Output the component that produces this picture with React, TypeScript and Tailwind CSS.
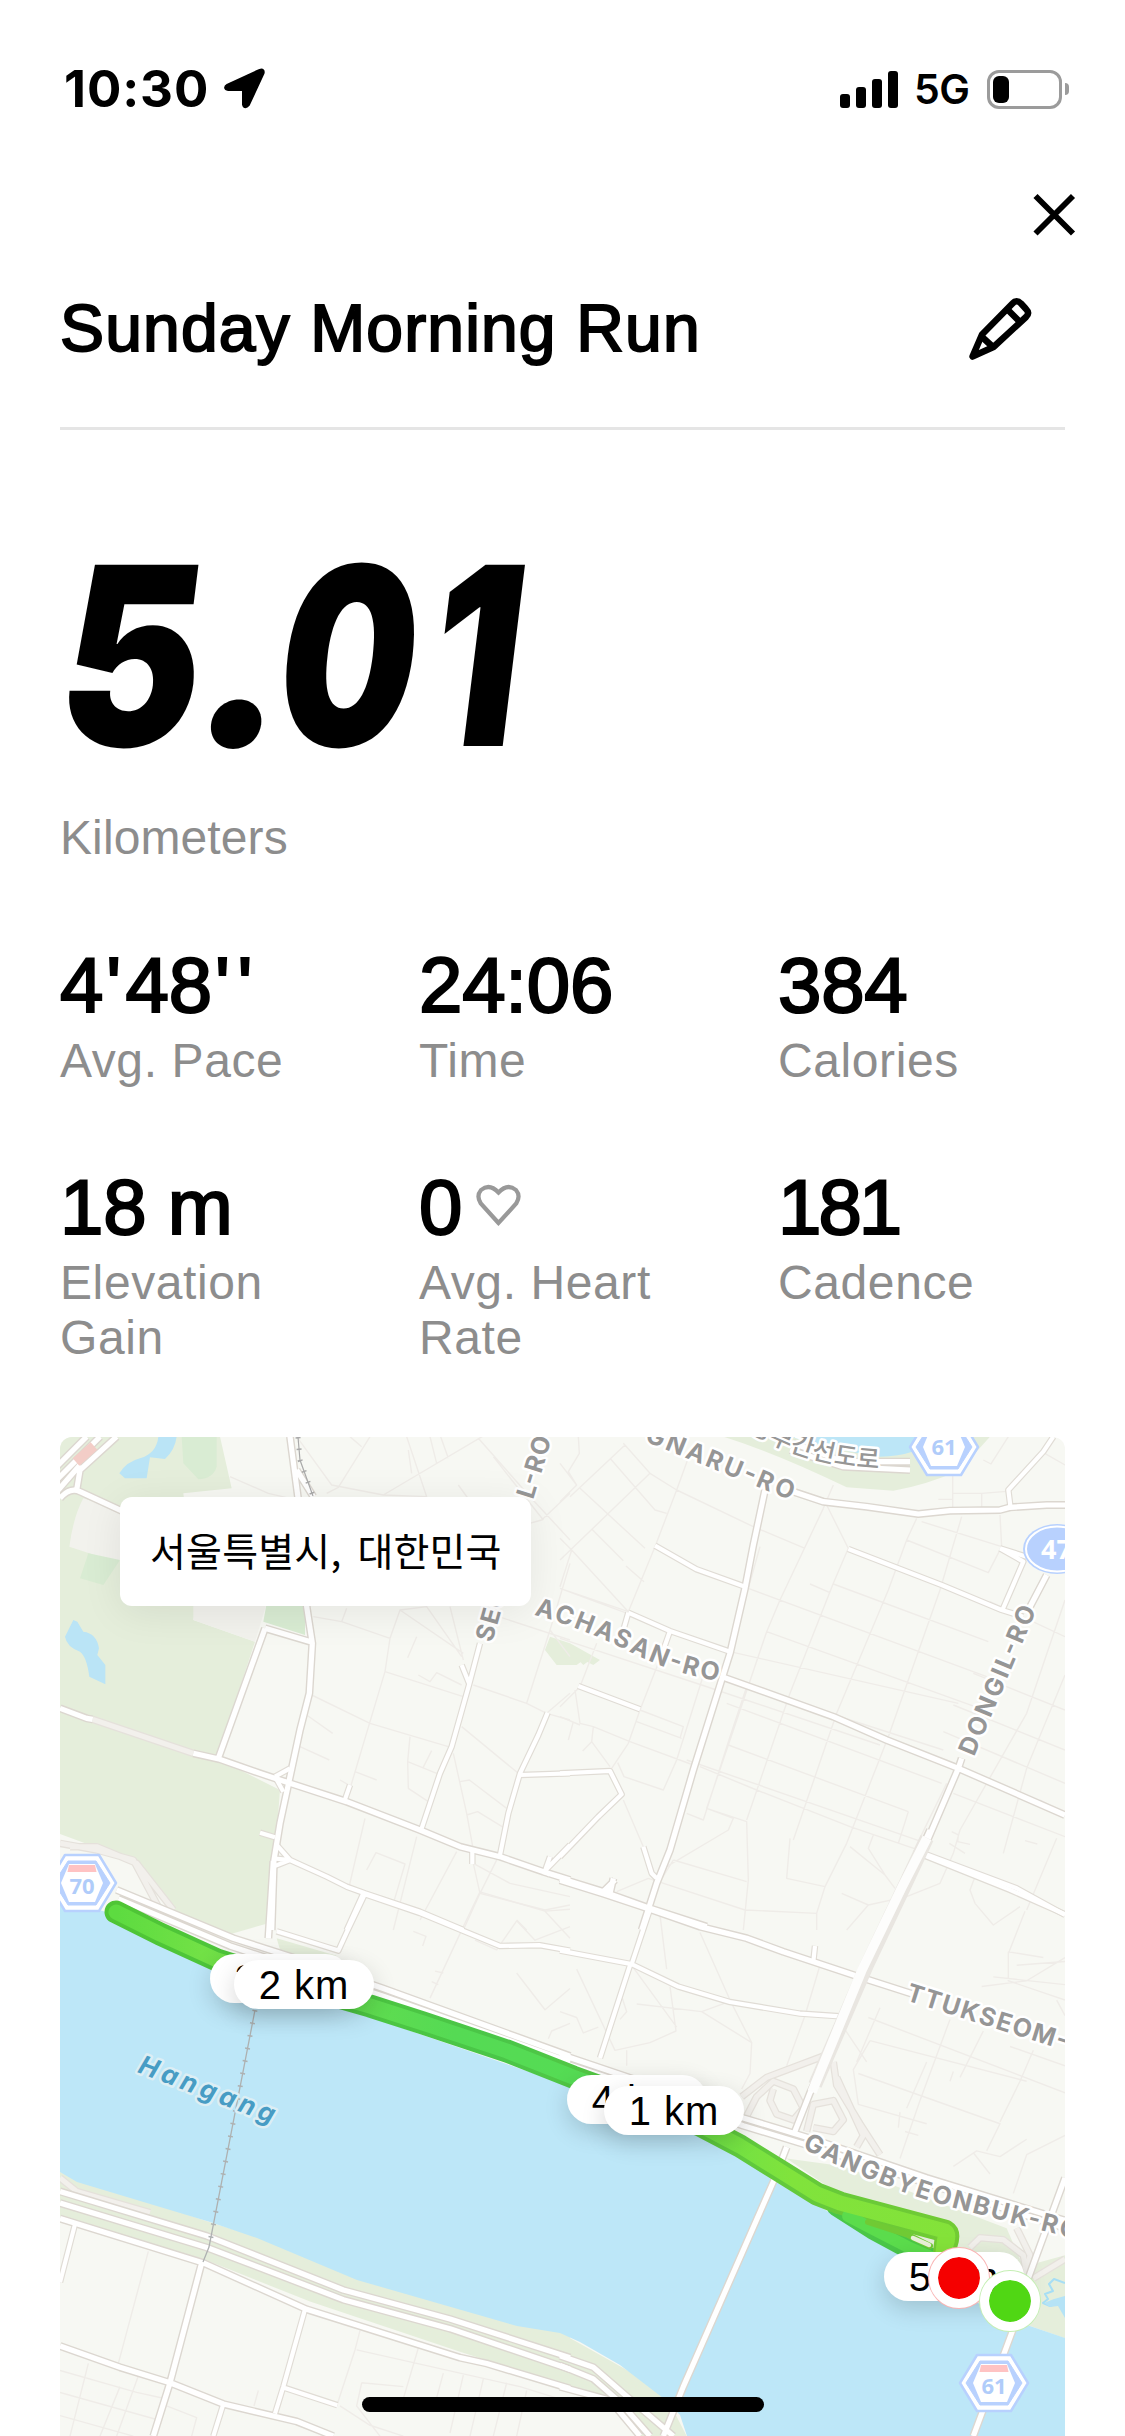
import React from "react";

type Stat = { value: string; label: string; heart?: boolean; tight?: boolean };

const STATS: Stat[] = [
  { value: "4'48''", label: "Avg. Pace" },
  { value: "24:06", label: "Time" },
  { value: "384", label: "Calories" },
  { value: "18 m", label: "Elevation Gain" },
  { value: "0", label: "Avg. Heart Rate", heart: true },
  { value: "181", label: "Cadence", tight: true },
];

const sans = "font-['Liberation_Sans',Arial,sans-serif]";

/* Map sheets: each tile keeps its own grid and is placed on the map with a transform. */
type Sheet = { transform: string; minor: string; mid: string; major: string; ramp: string };

const NW: Sheet = {
  transform: "translate(50 1430) scale(.33333)",
  minor:
    "M540 140L655 190L720 205M740 20L845 165L1000 195L1130 200L1070 20M960 20L865 172L830 190M900 20L935 50M1075 60L1085 130M1140 20L1160 100M1172 20L1195 85M1000 195L1330 0M1285 25L1440 200L1560 330M1225 165L1330 310L1475 270L1560 190M1330 80L1480 270M790 560L875 575L1020 625L1050 540L1130 530L1235 680M875 575L890 535M1020 625L1005 725L945 925L890 1110M1005 725L1240 800M1050 540L1240 670M1100 620L1073 683M1105 735L1140 755L1160 728L1235 765M785 795L960 880L1195 950M1080 920L1073 995L1160 1030M1073 995L1075 1075L1135 1115M1145 962L1118 1015M770 855L848 910M750 950L838 990M870 1050L905 1070M915 1025L980 1050M1200 530L1240 690M1270 765L1430 820L1490 850L1560 870M1430 820L1500 600L1560 400M1300 545L1560 630M1235 890L1405 1030M1210 970L1250 1150L1270 1260M1230 1055L1258 1050L1370 1135M1250 1155L1283 1145L1365 1195M1560 790L1490 850M945 1165L895 1380M1220 1265L1110 1470M1100 1220L1030 1500M950 1320L978 1268L1065 1302L1030 1420M1270 1300L1290 1390L1485 1440L1560 1425M1290 1390L1240 1500M1345 1280L1290 1390M1270 1300L1380 1360L1560 1400M1400 1470L1430 1500M1500 600L1560 680",
  mid: "M1290 640L1257 765L1205 950L1170 1030L1115 1195M1235 705L1257 760M1493 848L1465 915L1410 1030L1375 1150L1350 1275M1410 1035L1500 1032L1560 1030M900 1065L885 1108M1267 1265L1267 1302M1560 1245L1485 1322L1500 1280M1485 1322L1500 1335M630 1208L675 1222M680 1245L720 1290L670 1310M668 1285L720 1290M675 1040L720 1015M675 1040L700 1085M940 1390L890 1500M720 1290L830 1340L890 1370L945 1390L1110 1445L1240 1500",
  major:
    "M720 20L745 210L770 530L787 640L778 790L750 900L720 1040L690 1180L672 1290L665 1500M740 120L790 200M30 835L110 865L128 868M430 970L510 988L630 1030L720 1060L890 1115L1110 1200L1230 1250L1350 1280L1480 1325L1560 1350M645 595L787 637M645 595L505 985M30 205Q60 170 90 185L220 245M80 180L90 120L200 20M20 110L110 20M20 150L150 20M25 180L90 105",
  ramp: "M128 868L430 970M30 1240L140 1260L250 1290L330 1440M60 1250L140 1250L260 1300L370 1440",
};

const NE: Sheet = {
  transform: "translate(560 1430) scale(.33333)",
  minor:
    "M55 20L58 70L25 125L50 165L0 215M0 100L50 165M190 40L270 130L350 180L580 290L735 355M195 45L30 200M270 130L0 390M150 85L285 240L320 250M60 175L255 355M95 297L190 392M198 408L252 455M0 325L35 360L205 545M390 70L350 180L285 350L205 545M0 475L205 545M35 360L0 470M790 235L660 510L620 605L505 945L440 1135L560 1175L565 1350L550 1500M800 225L865 355L820 460L690 790L560 1170M1070 265L1040 330L985 480L830 850L700 1230M1205 260L1140 480L985 920L860 1240L795 1370L770 1450V1500M1040 330L1285 428L1325 350L1320 255M1085 275L1325 350M750 462L810 488M820 462L1285 635M600 350L565 475L1280 740M620 605L1245 830M510 665L1195 820M560 770L1150 960M505 945L1045 1145M380 990L1100 1240M500 820L1145 1060M510 665L0 475M0 625L425 765L960 945M110 640L60 770L0 830M330 610L240 840L205 940L155 1015M435 720L350 990L310 1080L192 1040L173 998M45 780L60 880L100 890L210 935L400 1005M100 890L95 935L150 1010M95 935L68 963M40 875L25 930M240 840L370 890L360 925M230 875L365 925M0 860L60 885M420 1010L590 1080L870 1190L1090 1265M380 1150L430 1170L510 920L560 770M440 1135L520 1165L505 1200L320 1310M340 1290L560 1355M690 1225L680 1345L795 1370M870 1250L975 1335L1005 1375M940 1215L925 1255L975 1335M1045 1145L1015 1240M1160 1060L1060 1265M1180 1090L1515 1220M1380 1430L1300 1485L1245 1420L1230 1380L1245 1340M1490 1225L1400 1440M1515 510L1400 850L1200 1200L1180 1270L1140 1360L1040 1400L925 1425M925 1425L860 1500M845 1390L925 1425M1515 620L1290 515M1515 735L1400 1015L1330 1270M1515 840L1240 730M1515 960L1180 825M1515 1060L1150 905M1515 1150L1440 1110M1175 1205L1195 1215L1193 1235L1230 1243M1168 1240L1215 1270M1395 1232L1432 1242M1178 20V240M1135 208H1178M1178 190H1265V240M1265 190L1340 184M1345 20L1293 102L1270 90M1445 65L1515 105M170 1385L265 1345M265 1345L555 1440L770 1450M300 1355L340 1290M190 1110L250 1250M820 165L790 235",
  mid: "M285 347L410 418L555 470M205 548L330 603L510 665M205 548L190 600M330 603L310 660M55 768L240 838M865 357L1145 465L1325 540L1390 560M1325 545L1390 395L1320 355M1320 355L1400 380M0 1030L150 1023L185 1093L115 1160L0 1280M250 1250L275 1330L290 1345M1090 1270L1370 1375L1515 1455M1480 20L1450 65L1345 180L1352 235",
  major:
    "M615 180L580 345L555 475L510 670L400 1020L330 1260L290 1360L245 1500M700 185L790 215L920 230L1075 252L1170 242L1320 240L1350 232L1460 225L1515 225M485 740L820 860L980 930L1195 1015L1515 1155M1460 435L1405 540M1205 985L1195 1015L1090 1260L1040 1365L970 1500M0 1345L130 1385L270 1435L440 1490M130 1385L165 1350M150 1390L160 1345M690 60L850 110L1050 120M700 40L850 95L1050 95",
  ramp: "",
};

const SW: Sheet = {
  transform: "translate(50 1830) scale(.33333 .38655)",
  minor:
    "M1290 160L1240 250L1140 435M1400 235L1340 310L1275 285M1290 160L1485 210L1560 205M1485 210L1560 280M1400 235L1455 285L1560 250M1090 262L1128 275L1118 300M1400 370L1485 465L1560 410M1155 365L1180 370M1145 392L1165 400M1495 540L1505 520L1560 500M295 1090L205 1380M930 1295L915 1345L860 1490M920 1345L1410 1440L1560 1480M1105 1340L1050 1500M1180 1405L1150 1500M1240 1410L1200 1560M1300 1420L1260 1568M1370 1430L1330 1568M1430 1450L1400 1568M935 1430L920 1490L990 1568M935 1430L1060 1440M115 1380L60 1568M30 1398L260 1455L340 1470M210 1440L150 1568M270 1400L200 1568M30 1455L320 1525M30 1515L250 1568M350 1490L440 1520L425 1568M625 1450L612 1490M870 1490L960 1540L1060 1568",
  mid: "M680 262L865 312L890 265L945 165M940 165L1110 215L1350 300L1470 298L1560 312M75 1020L30 1170M765 1240L700 1440L675 1510M700 1442L862 1488M520 1485L490 1568",
  major:
    "M30 1005L460 1120L770 1240L1230 1365L1310 1380L1560 1445M455 1120L360 1430L310 1568M30 1335L210 1390L360 1430L520 1485L740 1530L850 1568M200 155L550 280L730 330L1000 410L1560 585M205 178L540 300L1000 430L1560 600M30 935L470 1050L880 1190L1200 1265L1560 1365M30 965L470 1080L880 1215L1200 1290L1560 1395M670 80L655 280",
  ramp: "M30 900L80 935L300 990",
};

const SE: Sheet = {
  transform: "translate(560 1830) scale(.33333 .38655)",
  minor:
    "M300 220L320 360M420 265L510 440L575 550L570 630L545 670M780 350L735 480L680 610M0 470L50 485L70 525L115 510M50 360L165 570L270 550L348 520L330 405M215 350L350 510M185 430L200 470L180 490M230 450L425 470L520 440M425 470L575 550M200 570V610M925 485L1515 680M930 545L1400 650M930 545L880 620L895 710L1100 760M895 630L1320 760L1280 830M960 460L890 600M1170 490L1080 700L1020 850M1270 520L1200 640M1180 625L1170 650M1345 315V390L1515 440M1345 315L1450 330M1370 350L1515 340M1265 405L1400 390L1515 330M1300 380L1515 400M1395 210L1345 320M1490 440L1515 480M1350 560L1515 610M1420 570L1380 650L1320 755M1100 600L1040 720M1020 730L1015 770M1035 780L1075 790M1180 870L1250 830L1320 845L1400 800M1240 835L1290 890M1515 790L1400 840L1360 940M850 510L920 600",
  mid: "M0 312L215 347L355 405L510 445L720 475L840 482M215 347L270 205M210 350L120 590M765 300L760 340M1090 65L1350 155L1515 218",
  major:
    "M0 130L130 165L270 205L420 250L560 280L670 315L880 375L1060 425M1110 0L1030 150L900 400L750 680L700 790M0 580L240 650L550 745L760 800L1100 900L1515 1010M0 600L240 668L550 765L760 820L1050 900L1515 1030M1515 900L1430 1100L1350 1290M680 820L640 910L370 1440L310 1568M1360 1290L1240 1568M0 1360L100 1390L200 1465L340 1568M0 1385L100 1420L180 1480L270 1568M0 1440L150 1475L240 1568",
  ramp: "M545 690L620 640L790 585M560 740L590 690L640 650L700 670L730 720L700 750L650 735L630 700L640 670M740 780L760 710L820 700L850 750L820 780L760 770M820 600L830 660L900 760L960 840M830 640L910 790L890 820M1230 1080L1260 1055L1330 1060L1390 1100L1400 1150M1420 1160L1515 1110M1370 1030L1410 1100L1395 1160",
};

const SHEETS = [NW, NE, SW, SE];

function Layer({ kind, color, width }: { kind: "minor" | "mid" | "major" | "ramp"; color: string; width: number }) {
  return (
    <g fill="none" stroke={color} strokeWidth={width} strokeLinejoin="round">
      {SHEETS.map((s, i) => (
        <path key={i} d={s[kind]} transform={s.transform} vectorEffect="non-scaling-stroke" />
      ))}
    </g>
  );
}

function HexShield({ x, y, label, bar = true }: { x: number; y: number; label: string; bar?: boolean }) {
  return (
    <g transform={`translate(${x} ${y})`} strokeLinejoin="round">
      <path d="M-17 -28H17L34 0L17 28H-17L-34 0Z" fill="#fff" stroke="#b8d1fe" strokeWidth="2.5" />
      <path d="M-14 -22H14L28 0L14 22H-14L-28 0Z" fill="#b8d1fe" stroke="#b8d1fe" />
      <path d="M-13 -19H13L21 0L13 19H-13L-21 0Z" fill="#fff" />
      {bar && <path d="M-13 -18H13L14.500 -11H-14.500Z" fill="#ffc3c3" />}
      <text y={bar ? 11 : 8} textAnchor="middle" fontSize="22" fontWeight="700" fill="#b0ccfa" fontFamily="Noto Sans">
        {label}
      </text>
    </g>
  );
}

function RoadLabels() {
  return (
    <g
      fontFamily="Inter, sans-serif"
      fontWeight="700"
      fontSize="25"
      fill="#969696"
      stroke="#fff"
      strokeWidth="5"
      strokeLinejoin="round"
      paintOrder="stroke"
    >
      <defs>
        <path id="dongbu" d="M748 1430Q805 1467 892 1469" />
        <path id="gangbyeon" d="M802 2148Q880 2188 955 2208T1088 2242" />
        <path id="achasan" d="M534 1615Q580 1627 630 1652T728 1682" />
        <path id="hangang" d="M137 2072Q205 2098 287 2130" />
      </defs>
      <text transform="translate(533 1500) rotate(-73)" textLength="64">L-RO</text>
      <text transform="translate(492 1643) rotate(-74)" textLength="54">SEO</text>
      <text transform="translate(644 1441) rotate(22)" textLength="158">GNARU-RO</text>
      <text><textPath href="#achasan" textLength="196">ACHASAN-RO</textPath></text>
      <text transform="translate(974 1757) rotate(-67)" textLength="160">DONGIL-RO</text>
      <text transform="translate(905 2000) rotate(17.500)" textLength="168">TTUKSEOM-</text>
      <text><textPath href="#gangbyeon" textLength="290">GANGBYEONBUK-RO</textPath></text>
      <text fontFamily="Noto Sans CJK KR, sans-serif" fontSize="25" fontWeight="500"><textPath href="#dongbu">동부간선도로</textPath></text>
      <text fill="#479cc4" stroke="#dceef4" fontWeight="700" fontStyle="italic" fontSize="26">
        <textPath href="#hangang" textLength="144">Hangang</textPath>
      </text>
    </g>
  );
}

function RouteMap() {
  const route =
    "M116 1912L160 1934L217 1960L300 1986L370 2006L423 2023L507 2051L573 2077L650 2105L700 2125L740 2146L777 2169L817 2194L840 2203L900 2219L945 2231Q950 2234 946 2245";
  return (
    <svg viewBox="60 1437 1005 999" width="1005" height="999" className="block">
      <defs>
        <linearGradient id="pace" x1="117" y1="0" x2="960" y2="0" gradientUnits="userSpaceOnUse">
          <stop offset="0" stopColor="#5ddb40" />
          <stop offset=".1" stopColor="#72e146" />
          <stop offset=".4" stopColor="#55da54" />
          <stop offset=".56" stopColor="#55dc54" />
          <stop offset=".8" stopColor="#80e33c" />
          <stop offset="1" stopColor="#84e239" />
        </linearGradient>
        <linearGradient id="paceEdge" x1="117" y1="0" x2="960" y2="0" gradientUnits="userSpaceOnUse">
          <stop offset="0" stopColor="#4fc535" />
          <stop offset=".45" stopColor="#4ac648" />
          <stop offset="1" stopColor="#72cb33" />
        </linearGradient>
      </defs>
      <rect x="60" y="1437" width="1005" height="999" fill="#f7f8f3" />

      <g transform={NW.transform}>
        <path d="M30 20H510L545 175L400 190L440 530L430 570L615 635L500 985L690 1080L660 1478L540 1513L370 1444L250 1293L30 1212Z" fill="#e5eedb" />
        <path d="M100 205L220 245L225 395L150 380L58 350Q70 260 100 205ZM430 520L650 520L615 635L430 570Z" fill="#f2f2ed" />
        <path d="M395 20H500V110Q490 145 445 148L400 100ZM650 520H765V615L640 575ZM115 370L210 390L160 465L90 445Z" fill="#d9ecd3" />
        <path d="M325 20H380Q375 60 345 87L300 82L290 145H225L208 130Q230 95 270 85Q320 70 325 20ZM70 570L82 575L100 605Q140 610 147 655L142 675L166 705V763L118 740Q110 680 90 665Q50 650 45 620Z" fill="#bae4f6" />
        <path d="M1500 620L1560 640L1650 690L1630 705L1600 690L1580 705H1520L1485 660Z" fill="#e5eedb" />
      </g>
      <g transform={NE.transform}>
        <path d="M490 20H1290L1200 120Q1100 165 1000 182L860 172Q650 70 490 20Z" fill="#e5eedb" />
        <path d="M690 20H1150Q1070 78 960 80Q850 65 690 20Z" fill="#bce6f7" />
        <path d="M0 635L90 690L70 705L50 685L30 705H0Z" fill="#e5eedb" />
      </g>
      <g transform={SW.transform}>
        <path d="M30 885L480 1015L1400 1260L1560 1300V1440L1230 1350L780 1220L460 1110L30 1000ZM680 280L860 325L800 345L690 310Z" fill="#e5eedb" />
      </g>
      <g transform={SE.transform}>
        <path d="M0 1300L310 1450L380 1568H240L150 1480L0 1440ZM680 850L850 870L1340 1030L1390 1130L1515 1100V1315L1400 1280L1190 1180L850 950Z" fill="#e5eedb" />
      </g>
      <path
        d="M60 1900L103 1911L210 1965L350 2010L570 2086L703 2133L773 2178L837 2217L900 2253L960 2295L1027 2325L1065 2338V2436H687L680 2415L663 2398L620 2365L580 2342L560 2333L517 2326L357 2280L257 2238L210 2222L77 2182L60 2172Z"
        fill="#bde7f8"
      />
      <path
        d="M1065 2283L1054 2279L1049 2284L1053 2291L1045 2294L1048 2299L1043 2303L1050 2306L1065 2301"
        fill="none"
        stroke="#a6def5"
        strokeWidth="2"
        strokeLinejoin="round"
      />
      <path d="M1044 2303L1054 2299L1065 2296V2318L1058 2306L1050 2307Z" fill="#b5e3f6" />

      <Layer kind="minor" color="#efece8" width={1.4} />
      <Layer kind="ramp" color="#e5e1db" width={7.5} />
      <Layer kind="ramp" color="#f2f0ec" width={5} />
      <Layer kind="mid" color="#e0dcd5" width={6.5} />
      <Layer kind="major" color="#dcd7d0" width={8} />
      <Layer kind="mid" color="#fff" width={4.2} />
      <Layer kind="major" color="#fff" width={5.2} />
      <path d="M927 1838L905 1885L867 1965L815 2085" fill="none" stroke="#e9e6e1" strokeWidth="14" />
      <path d="M927 1838L903 1885L862 1970L812 2092" fill="none" stroke="#fdfdfc" strokeWidth="9.500" />
      <path d="M76 1462L94 1446" stroke="#f3cdc7" strokeWidth="10" />
      <path d="M255 2010L209 2247L203 2262" fill="none" stroke="#aeb1b1" strokeWidth="1.300" />
      <path d="M255 2010L209 2247" fill="none" stroke="#aeb1b1" strokeWidth="5" strokeDasharray="1.500 11.300" />
      <path d="M298 1437L300 1460L313 1496" fill="none" stroke="#aaa" strokeWidth="1.200" />
      <path d="M298 1437L300 1460L313 1496" fill="none" stroke="#aaa" strokeWidth="5" strokeDasharray="1.500 10" />

      <RoadLabels />

      <g fill="none" strokeLinecap="round" strokeLinejoin="round">
        <path d="M837 2206L873 2229L910 2249L975 2278" stroke="#4ac648" strokeWidth="21" />
        <path d={route} stroke="url(#paceEdge)" strokeWidth="23" />
        <path d="M946 2240L944 2256" stroke="#72cb33" strokeWidth="23" />
        <path d="M848 2216L873 2229L910 2248L975 2276" stroke="#5bdc4c" strokeWidth="12" />
        <path d={route} stroke="url(#pace)" strokeWidth="15" />
        <path d="M944 2240L942 2256" stroke="#84e239" strokeWidth="14" />
        <path d="M868 2222L908 2235L930 2246" stroke="#70ca34" strokeWidth="6" />
        <path d="M913 2238L929 2245" stroke="#e8f0da" strokeWidth="4.500" />
      </g>

      <HexShield x={82} y={1883} label="70" />
      <HexShield x={944} y={1447} label="61" bar={false} />
      <HexShield x={994} y={2383} label="61" />
      <g>
        <ellipse cx="1057" cy="1549" rx="34" ry="25" fill="#b8d1fe" />
        <ellipse cx="1057" cy="1549" rx="31" ry="22.500" fill="#b8d1fe" stroke="#fff" strokeWidth="2" />
        <text x="1041" y="1559" fontSize="27" fontWeight="700" fill="#fff" fontFamily="Noto Sans">47</text>
      </g>
    </svg>
  );
}

function Pill({ className, children }: { className: string; children: React.ReactNode }) {
  return (
    <div
      className={`absolute flex h-[49px] w-[140px] items-center justify-center rounded-full bg-white text-[40px] leading-none tracking-[0.9px] shadow-[0_8px_24px_rgba(0,0,0,0.16)] ${className}`}
    >
      {children}
    </div>
  );
}

function StatusBar() {
  return (
    <header className="flex h-[178px] items-start justify-between pl-[64px] pr-[56px] pt-[59px] font-['Inter',sans-serif]">
      <div className="flex h-[60px] items-center">
        <span className="w-[159px] text-[51px] font-bold leading-[60px] tracking-[0.9px]">10:30</span>
        <svg width="44" height="44" viewBox="0 0 44 44">
          <path d="M5 18.500L37 3.800Q40.500 2.800 39.500 6.200L25 37.500Q22 41 21 37.500V22H5.500Q1 21 5 18.500Z" fill="#000" stroke="#000" strokeWidth="4" strokeLinejoin="round" />
        </svg>
      </div>
      <div className="flex h-[60px] items-center">
        <div className="flex h-[38px] items-end gap-1.5">
          <span className="h-[14px] w-[10px] rounded-[3px] bg-black" />
          <span className="h-[21px] w-[10px] rounded-[3px] bg-black" />
          <span className="h-[29px] w-[10px] rounded-[3px] bg-black" />
          <span className="h-[37px] w-[10px] rounded-[3px] bg-black" />
        </div>
        <span className="ml-[16px] w-[73px] text-[41px] font-semibold leading-[60px] tracking-[-0.5px]">5G</span>
        <div className="flex h-[39px] w-[75px] items-center rounded-[12px] border-[3px] border-[#9b9b9b] pl-[3px]">
          <span className="h-[27px] w-[16px] rounded-[6px] bg-black" />
        </div>
        <span className="ml-[3px] h-[12px] w-[4px] rounded-r-full bg-[#9b9b9b]" />
      </div>
    </header>
  );
}

function StatCell({ value, label, heart, tight }: Stat) {
  return (
    <div className="flex h-[222px] flex-col">
      <div className="flex h-[80px] items-center">
        <span className={`whitespace-pre text-[78px] leading-[80px] [-webkit-text-stroke:2.2px_black] ${tight ? "tracking-[-3px]" : "tracking-[-0.2px]"}`}>
          {value.split(/(')/).map((part, i) =>
            part === "'" ? (
              <span key={i} className="pl-[3px] tracking-[4.5px]">
                {part}
              </span>
            ) : (
              part
            ),
          )}
        </span>
        {heart && (
          <svg width="47" height="44" viewBox="0 0 47 44" className="-mt-[4px] ml-[13px]" fill="none">
            <path d="M23.500 40L5.800 20.500Q1 13 6 7Q14.500 0 23.500 9.500Q32.500 0 41 7Q46 13 41.200 20.500Z" stroke="#999" strokeWidth="4.200" />
          </svg>
        )}
      </div>
      <div className="mt-[8px] w-[260px] text-[48px] leading-[55px] tracking-[0.6px] text-[#8d8d8d]">{label}</div>
    </div>
  );
}

export default function App() {
  return (
    <div className={`relative flex h-[2436px] w-[1125px] flex-col overflow-hidden bg-white text-black ${sans}`}>
      <StatusBar />

      <div className="flex h-[102px] justify-end pr-[48px] pt-[14px]">
        <svg width="46" height="46" viewBox="0 0 46 46" stroke="#000" strokeWidth="5.800">
          <path d="M4.500 4L42 41.500M42 4L4.500 41.500" />
        </svg>
      </div>

      <main className="flex flex-col px-[60px]">
        <div className="flex h-[150px] items-start justify-between border-b-[3px] border-[#e5e5e5]">
          <h1 className="text-[66px] font-normal leading-[96px] tracking-[1.15px] [-webkit-text-stroke:2px_black]">Sunday Morning Run</h1>
          <svg width="120" height="100" viewBox="0 0 120 100" fill="none" stroke="#000" strokeWidth="6.500" strokeLinejoin="round" className="mr-[5px]">
            <path d="M32.500 76.500L42 54.500L72.500 23.500Q76.500 19 81 23.500L86 29Q90 33 86 37L53.500 67Z" />
            <path d="M67 29L80 42M41 56L54 68" />
          </svg>
        </div>

        <div className="mt-[95px] h-[285px] pt-[1px]">
          <div className="-ml-[13px] flex h-[260px] origin-bottom-left -skew-x-[7deg] font-['Inter',sans-serif] text-[249px] font-black leading-[260px]">
            <span className="w-[135px] origin-left scale-x-[0.85]">5</span>
            <span className="w-[83px] origin-left">.</span>
            <span className="w-[152px] origin-left scale-x-[0.78]">0</span>
            <span className="w-[100px] origin-left scale-x-[0.8]">1</span>
          </div>
        </div>
        <div className="h-[135px] text-[48px] leading-[55px] tracking-[0.1px] text-[#8d8d8d]">Kilometers</div>

        <section className="grid h-[492px] grid-cols-[359px_359px_1fr] content-start">
          {STATS.map((s) => (
            <StatCell key={s.label} {...s} />
          ))}
        </section>

        <section className="relative h-[999px] w-[1005px] overflow-hidden rounded-t-[12px]">
          <RouteMap />
          <div className="absolute left-[60px] top-[60px] flex h-[109px] w-[411px] items-center whitespace-nowrap rounded-[12px] bg-white pb-[4px] pl-[30px] font-['Noto_Sans_CJK_KR',sans-serif] text-[39px] leading-none tracking-[0.2px] shadow-[0_6px_40px_rgba(0,0,0,0.08)] [word-spacing:7px]">
            서울특별시, 대한민국
          </div>
          <Pill className="left-[150px] top-[517px]">3 km</Pill>
          <Pill className="left-[174px] top-[523px]">2 km</Pill>
          <Pill className="left-[507px] top-[638px]">4 km</Pill>
          <Pill className="left-[544px] top-[649px]">1 km</Pill>
          <Pill className="left-[824px] top-[815px]">5 km</Pill>
          <span className="absolute left-[869px] top-[811px] size-[60px] rounded-full border-[9px] border-white bg-[#f50000] bg-clip-padding ring-1 ring-[#f9b4b4]" />
          <span className="absolute left-[920px] top-[834px] size-[60px] rounded-full border-[9px] border-white bg-[#50d714] bg-clip-padding ring-1 ring-[#c5efb4]" />
        </section>
      </main>

      <div className="absolute bottom-[24px] left-[362px] h-[15px] w-[402px] rounded-full bg-black" />
    </div>
  );
}
